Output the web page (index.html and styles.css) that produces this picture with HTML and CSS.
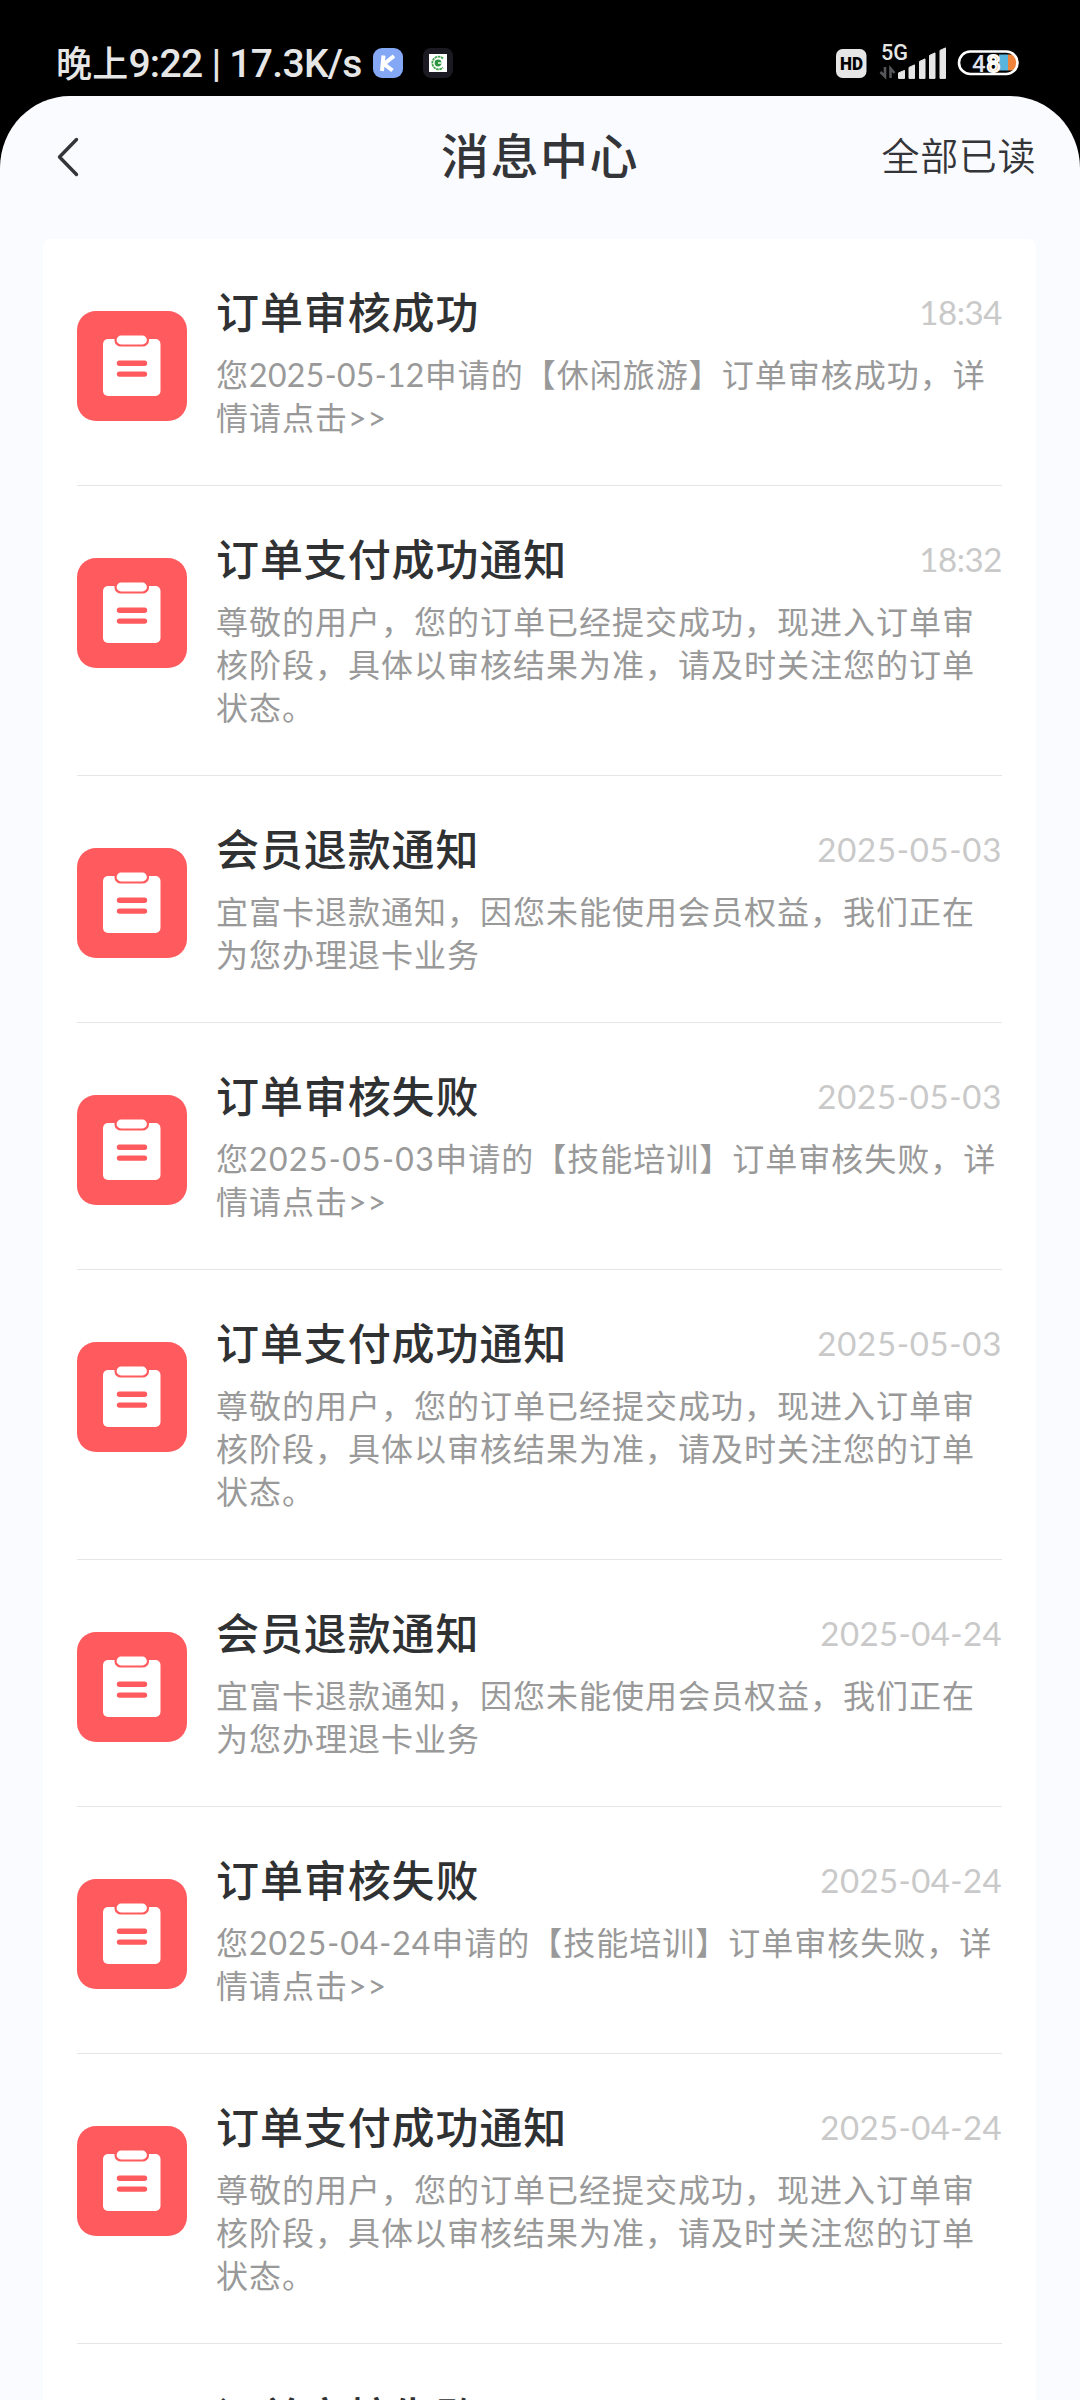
FILE: index.html
```html
<!DOCTYPE html>
<html lang="zh-CN">
<head>
<meta charset="utf-8">
<title>消息中心</title>
<link rel="stylesheet" href="styles.css">
</head>
<body>
<svg class="defs" width="0" height="0">
  <symbol id="order" viewBox="0 0 110 110">
    <rect width="110" height="110" rx="19" fill="#ff5a5d"/>
    <rect x="26" y="28" width="57.5" height="57" rx="5" fill="#fff"/>
    <rect x="38.500" y="23.500" width="32.500" height="11" rx="5.500" fill="#fff" stroke="#ff5a5d" stroke-width="2.200"/>
    <path d="M42.500 52.200h25M42.500 63.100h25" stroke="#ff5a5d" stroke-width="5.400" stroke-linecap="round"/>
  </symbol>
</svg>
<div class="phone">
  <div class="status">
    <span class="clock"><span class="clock-cn">晚上</span>9:22 | 17.3K/s</span>
    <svg class="app-k" width="30" height="30" viewBox="0 0 30 30"><rect width="30" height="30" rx="9" fill="#84a8f5"/><path d="M10.500 7.500L9 23M21 8L11 16L19.500 22.500" fill="none" stroke="#fff" stroke-width="4"/></svg>
    <svg class="app-c" width="30" height="30" viewBox="0 0 30 30"><rect width="30" height="30" rx="8" fill="#1b1a22"/><path d="M6 6h18v18H6z" fill="#fff"/><path d="M20 10.500A6.300 6.300 0 1 0 20 19.500" fill="none" stroke="#45a650" stroke-width="1.800" stroke-dasharray="2.500 .6"/><circle cx="15" cy="15" r="3.400" fill="#2e9440"/><path d="M15 14h3v2h-3z" fill="#bfe3c1"/></svg>
    <svg class="system" width="186" height="40" viewBox="0 0 186 40">
      <rect x="0" y="5" width="30.500" height="29" rx="6.500" fill="#e6e6e6"/>
      <text class="hd" x="4" y="25.500" textLength="23" lengthAdjust="spacingAndGlyphs">HD</text>
      <text class="net" x="45" y="16.300" textLength="27" lengthAdjust="spacingAndGlyphs">5G</text>
      <path d="M49 23v9.500l-4.500-4.500M54.500 34v-9.500l4 4.500" fill="none" stroke="#55575a" stroke-width="2.600"/>
      <path d="M62.500 35v-5.500l6-2.500v8zM73 35V24l5.500-2.500V35zM83.500 35V18l5.500-2.500V35zM93.500 35V12l5.500-2.500V35zM104 35V7l5.500-2.500V35z" fill="#e6e6e6" stroke="#e6e6e6" stroke-width="1" stroke-linejoin="round" transform="translate(0 -.6)"/>
      <path d="M163 10.500h9v16h-9z" fill="#58b4dd"/>
      <path d="M172 10.500h2.500a8 8 0 0 1 0 16H172z" fill="#f0833a"/>
      <rect x="123" y="7.500" width="58.500" height="22.500" rx="11.250" fill="none" stroke="#fff" stroke-width="2.600"/>
      <text class="level" x="136" y="27.500">4</text>
      <text class="level level-hot" x="150.500" y="27.500">8</text>
    </svg>
  </div>
  <div class="sheet">
    <header class="bar">
      <svg class="back" width="24" height="40" viewBox="0 0 24 40"><path d="M20.500 2.500L3.500 20L20.500 37.500" fill="none" stroke="#333539" stroke-width="3.400" stroke-linecap="round" stroke-linejoin="round"/></svg>
      <h1>消息中心</h1>
      <span class="read-all">全部已读</span>
    </header>
    <main class="list">
      <article class="item">
        <svg class="icon"><use href="#order"/></svg>
        <div class="body"><div class="head"><h2>订单审核成功</h2><time class="hour">18:34</time></div>
        <p>您<span class="date-narrow">2025-05-12</span>申请的【休闲旅游】订单审核成功，详<br>情请点击&gt;&gt;</p></div>
      </article>
      <article class="item">
        <svg class="icon"><use href="#order"/></svg>
        <div class="body"><div class="head"><h2>订单支付成功通知</h2><time class="hour">18:32</time></div>
        <p>尊敬的用户，您的订单已经提交成功，现进入订单审<br>核阶段，具体以审核结果为准，请及时关注您的订单<br>状态。</p></div>
      </article>
      <article class="item">
        <svg class="icon"><use href="#order"/></svg>
        <div class="body"><div class="head"><h2>会员退款通知</h2><time class="wide">2025-05-03</time></div>
        <p>宜富卡退款通知，因您未能使用会员权益，我们正在<br>为您办理退卡业务</p></div>
      </article>
      <article class="item">
        <svg class="icon"><use href="#order"/></svg>
        <div class="body"><div class="head"><h2>订单审核失败</h2><time class="wide">2025-05-03</time></div>
        <p>您<span class="date-wide">2025-05-03</span>申请的【技能培训】订单审核失败，详<br>情请点击&gt;&gt;</p></div>
      </article>
      <article class="item">
        <svg class="icon"><use href="#order"/></svg>
        <div class="body"><div class="head"><h2>订单支付成功通知</h2><time class="wide">2025-05-03</time></div>
        <p>尊敬的用户，您的订单已经提交成功，现进入订单审<br>核阶段，具体以审核结果为准，请及时关注您的订单<br>状态。</p></div>
      </article>
      <article class="item">
        <svg class="icon"><use href="#order"/></svg>
        <div class="body"><div class="head"><h2>会员退款通知</h2><time>2025-04-24</time></div>
        <p>宜富卡退款通知，因您未能使用会员权益，我们正在<br>为您办理退卡业务</p></div>
      </article>
      <article class="item">
        <svg class="icon"><use href="#order"/></svg>
        <div class="body"><div class="head"><h2>订单审核失败</h2><time>2025-04-24</time></div>
        <p>您2025-04-24申请的【技能培训】订单审核失败，详<br>情请点击&gt;&gt;</p></div>
      </article>
      <article class="item">
        <svg class="icon"><use href="#order"/></svg>
        <div class="body"><div class="head"><h2>订单支付成功通知</h2><time>2025-04-24</time></div>
        <p>尊敬的用户，您的订单已经提交成功，现进入订单审<br>核阶段，具体以审核结果为准，请及时关注您的订单<br>状态。</p></div>
      </article>
      <article class="item">
        <svg class="icon"><use href="#order"/></svg>
        <div class="body"><div class="head"><h2>订单审核失败</h2></div></div>
      </article>
    </main>
  </div>
</div>
</body>
</html>
```
FILE: styles.css
```css
* { box-sizing: border-box; }
body {
  margin: 0;
  background: #000;
  font-family: Lato, "Noto Sans CJK SC", sans-serif;
}
h1, h2, p { margin: 0; }
.defs { display: block; height: 0; }
.phone {
  width: 1080px;
  height: 2400px;
  overflow: hidden;
  display: flex;
  flex-direction: column;
  background: #000;
}
.status {
  height: 96px;
  flex: none;
  display: flex;
  align-items: flex-start;
  padding: 44px 58px 0 56px;
}
.clock {
  width: 317px;
  flex: none;
  margin-top: -5px;
  font: 500 39px/50px Roboto, "Noto Sans CJK SC", sans-serif;
  color: #e6e6e6;
  white-space: nowrap;
  letter-spacing: -.7px;
}
.clock-cn { font-size: 36px; letter-spacing: .2px; }
.app-k, .app-c { flex: none; margin-top: 4px; }
.app-c { margin-left: 20px; }
.system { flex: none; margin-left: auto; overflow: visible; }
.hd { font: 900 19px Roboto, sans-serif; fill: #000; }
.net { font: 500 22px Roboto, sans-serif; fill: #e6e6e6; }
.level { font: 500 24px Roboto, sans-serif; fill: #dfe2ee; }
.level-hot { fill: #f0a35f; stroke: #fff; stroke-width: 2px; }
.sheet {
  flex: 1;
  min-height: 0;
  background: #fafbff;
  border-radius: 70px 70px 0 0 / 72px 72px 0 0;
}
.bar {
  height: 143px;
  padding: 0 44px 0 56px;
  display: grid;
  grid-template-columns: 1fr auto 1fr;
  align-items: start;
}
.back { margin-top: 41px; }
h1 {
  margin: 22px 12px 0 0;
  font-size: 48px;
  line-height: 70px;
  font-weight: 500;
  letter-spacing: 1.500px;
  color: #333539;
  font-family: "Noto Sans CJK SC", sans-serif;
}
.read-all {
  justify-self: end;
  margin-top: 28px;
  font-size: 38px;
  line-height: 60px;
  letter-spacing: .6px;
  color: #333539;
  font-family: "Noto Sans CJK SC", sans-serif;
  font-weight: 350;
}
.list {
  margin: 0 44px 0 43px;
  background: #fff;
  border-radius: 8px 8px 0 0;
  padding: 0 34px;
}
.item {
  display: flex;
  gap: 29px;
  padding: 44px 0 46px;
  border-bottom: 1px solid #e6e6e8;
}
.icon { width: 110px; height: 110px; flex: none; margin-top: 28px; }
.body { flex: 1; min-width: 0; }
.head {
  height: 70px;
  display: flex;
  justify-content: space-between;
}
h2 {
  margin-top: -3px;
  font-size: 43px;
  line-height: 60px;
  font-weight: 500;
  letter-spacing: .9px;
  color: #303133;
  font-family: "Noto Sans CJK SC", sans-serif;
}
time {
  margin-top: -1px;
  font-size: 33px;
  line-height: 60px;
  letter-spacing: .4px;
  color: #c9c9c9;
}
.hour { letter-spacing: -.4px; }
.wide { letter-spacing: .7px; }
p {
  font-size: 32px;
  line-height: 43px;
  letter-spacing: 1px;
  color: #999;
  white-space: nowrap;
}
.date-narrow { letter-spacing: .35px; }
.date-wide { letter-spacing: 1.400px; }
```
